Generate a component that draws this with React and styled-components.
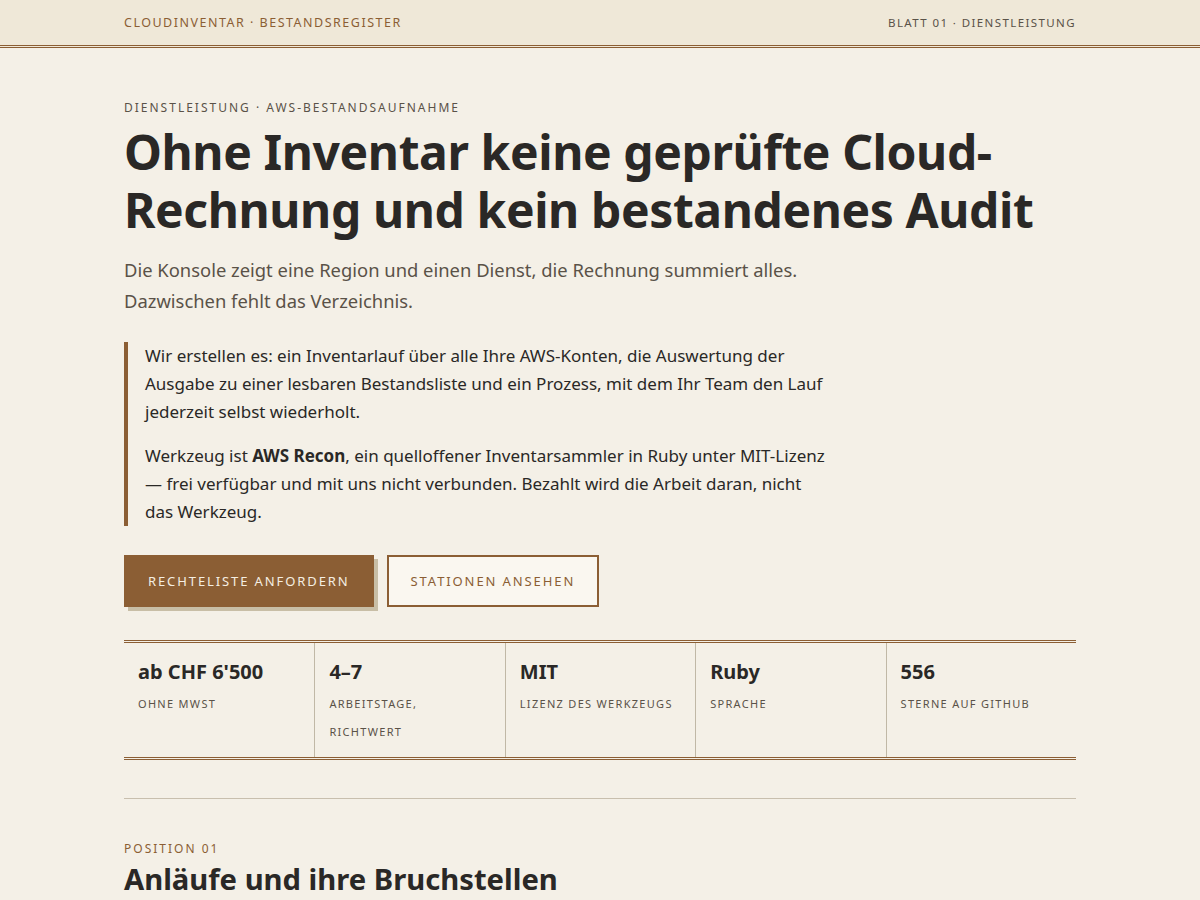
import styled, { createGlobalStyle } from "styled-components";

const Global = createGlobalStyle`
  body {
    margin: 0;
    background: #f4f0e7;
    font-family: "Noto Sans", "Open Sans", sans-serif;
    color: #2a2826;
  }
  * { box-sizing: border-box; }
`;

const Wrap = styled.div`
  max-width: 952px;
  margin: 0 auto;
`;

const Header = styled.header`
  background: #efe8d8;
  border-bottom: 3px double #8b5e34;
`;

const HeaderRow = styled(Wrap)`
  display: flex;
  justify-content: space-between;
  align-items: center;
  height: 45px;
`;

const Brand = styled.span`
  letter-spacing: ${(p) => (p.$muted ? "1.4px" : "1.5px")};
  color: ${(p) => (p.$muted ? "#5a5248" : "#8b5e34")};
  text-transform: uppercase;
  font-size: ${(p) => (p.$muted ? "11.5px" : "12.5px")};
`;

const Main = styled(Wrap)`
  padding-top: 52px;
`;

const Eyebrow = styled.div`
  font-size: 12px;
  letter-spacing: 2px;
  text-transform: uppercase;
  color: ${(p) => (p.$accent ? "#8b5e34" : "#5a5248")};
  line-height: 16px;
`;

const Title = styled.h1`
  margin: 7px 0 0;
  font-size: 48px;
  line-height: 58px;
  font-weight: 700;
  letter-spacing: -0.4px;
  color: #2a2826;
`;

const Lead = styled.p`
  margin: 15px 0 0;
  font-size: 18.4px;
  line-height: 31px;
  color: #5a5248;
  max-width: 720px;
`;

const Quote = styled.div`
  margin-top: 26px;
  border-left: 4px solid #8b5e34;
  padding: 0 0 0 17px;
  max-width: 704px;
`;

const QuotePara = styled.p`
  margin: 0;
  font-size: 17px;
  line-height: 28px;
  color: #2a2826;
  & + & { margin-top: 16px; }
  strong { font-weight: 700; }
`;

const Actions = styled.div`
  display: flex;
  gap: 13px;
  margin-top: 29px;
`;

const Button = styled.a`
  display: inline-flex;
  align-items: center;
  height: 52px;
  padding: 0 ${(p) => (p.$primary ? "24px" : "22px")};
  font-size: 13px;
  letter-spacing: 1.9px;
  text-transform: uppercase;
  cursor: pointer;
  background: ${(p) => (p.$primary ? "#8b5e34" : "#faf7f0")};
  color: ${(p) => (p.$primary ? "#f5eee2" : "#8b5e34")};
  border: ${(p) => (p.$primary ? "none" : "2px solid #8b5e34")};
  box-shadow: ${(p) => (p.$primary ? "4px 4px 0 #c8bea6" : "none")};
`;

const Stats = styled.div`
  display: grid;
  grid-template-columns: repeat(5, 1fr);
  margin-top: 33px;
  border-top: 3px double #8b5e34;
  border-bottom: 3px double #8b5e34;
`;

const Stat = styled.div`
  padding: 16px 14px 10px;
  min-height: 114px;
  & + & { border-left: 1px solid #c0b8a6; }
`;

const StatValue = styled.div`
  font-size: 20px;
  font-weight: 700;
  line-height: 26px;
  color: #2a2826;
`;

const StatLabel = styled.div`
  margin-top: 5px;
  font-size: 11px;
  letter-spacing: 1.3px;
  line-height: 28px;
  text-transform: uppercase;
  color: #5a5248;
`;

const Rule = styled.hr`
  margin: 38px 0 0;
  border: none;
  border-top: 1px solid #c8bfae;
`;

const Section = styled.section`
  padding-top: 42px;
`;

const SectionTitle = styled.h2`
  margin: 2px 0 0;
  font-size: 29.2px;
  line-height: 40px;
  font-weight: 700;
  color: #2a2826;
`;

const stats = [
  { value: "ab CHF 6'500", label: "Ohne MwSt" },
  { value: "4–7", label: "Arbeitstage, Richtwert" },
  { value: "MIT", label: "Lizenz des Werkzeugs" },
  { value: "Ruby", label: "Sprache" },
  { value: "556", label: "Sterne auf GitHub" },
];

export default function App() {
  return (
    <>
      <Global />
      <Header>
        <HeaderRow>
          <Brand>Cloudinventar · Bestandsregister</Brand>
          <Brand $muted>Blatt 01 · Dienstleistung</Brand>
        </HeaderRow>
      </Header>
      <Main>
        <Eyebrow>Dienstleistung · AWS-Bestandsaufnahme</Eyebrow>
        <Title>
          Ohne Inventar keine geprüfte Cloud-Rechnung und kein bestandenes Audit
        </Title>
        <Lead>
          Die Konsole zeigt eine Region und einen Dienst, die Rechnung summiert
          alles. Dazwischen fehlt das Verzeichnis.
        </Lead>
        <Quote>
          <QuotePara>
            Wir erstellen es: ein Inventarlauf über alle Ihre AWS-Konten, die
            Auswertung der Ausgabe zu einer lesbaren Bestandsliste und ein
            Prozess, mit dem Ihr Team den Lauf jederzeit selbst wiederholt.
          </QuotePara>
          <QuotePara>
            Werkzeug ist <strong>AWS Recon</strong>, ein quelloffener
            Inventarsammler in Ruby unter MIT-Lizenz — frei verfügbar und mit
            uns nicht verbunden. Bezahlt wird die Arbeit daran, nicht das
            Werkzeug.
          </QuotePara>
        </Quote>
        <Actions>
          <Button $primary>Rechteliste anfordern</Button>
          <Button>Stationen ansehen</Button>
        </Actions>
        <Stats>
          {stats.map((s) => (
            <Stat key={s.value}>
              <StatValue>{s.value}</StatValue>
              <StatLabel>{s.label}</StatLabel>
            </Stat>
          ))}
        </Stats>
        <Rule />
        <Section>
          <Eyebrow $accent>Position 01</Eyebrow>
          <SectionTitle>Anläufe und ihre Bruchstellen</SectionTitle>
        </Section>
      </Main>
    </>
  );
}
